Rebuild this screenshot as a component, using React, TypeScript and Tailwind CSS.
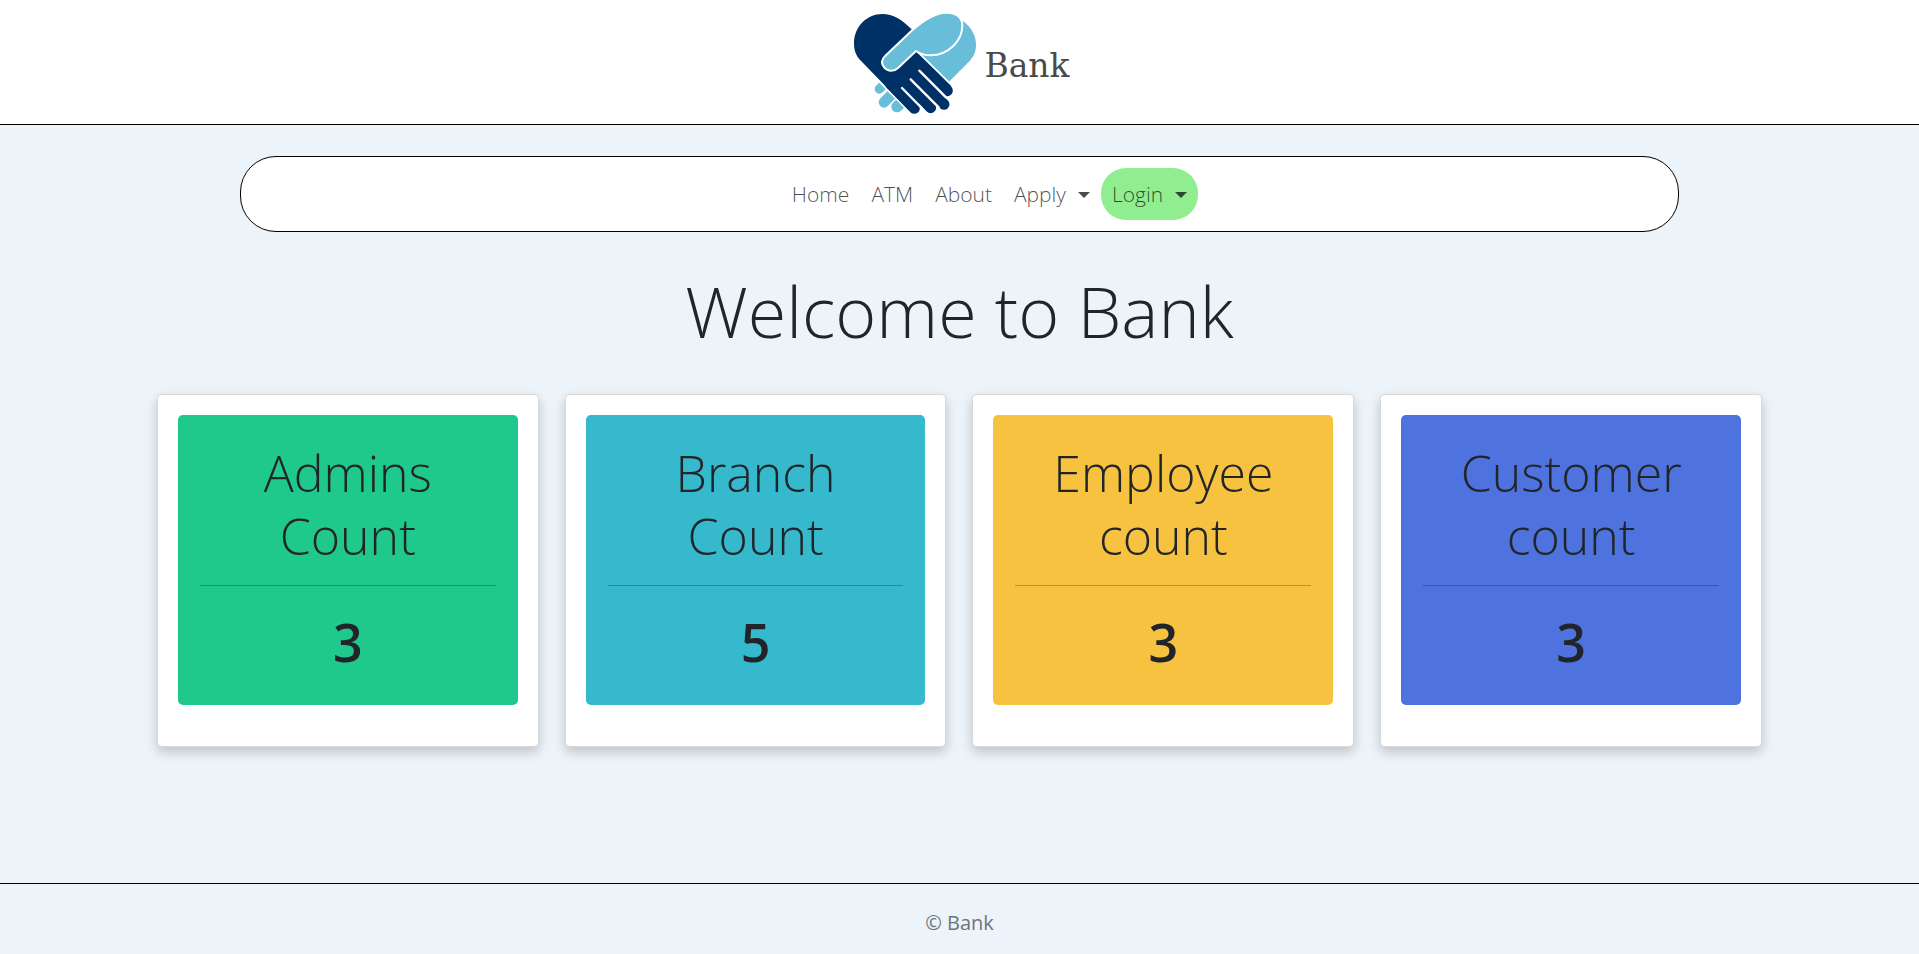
import React from "react";

type NavItem = { label: string; menu?: boolean; highlight?: boolean };

const navItems: NavItem[] = [
  { label: "Home" },
  { label: "ATM" },
  { label: "About" },
  { label: "Apply", menu: true },
  { label: "Login", menu: true, highlight: true },
];

const stats = [
  { title: ["Admins", "Count"], value: 3, color: "bg-[#1ec98b]" },
  { title: ["Branch", "Count"], value: 5, color: "bg-[#36b8cd]" },
  { title: ["Employee", "count"], value: 3, color: "bg-[#f7c240]" },
  { title: ["Customer", "count"], value: 3, color: "bg-[#4e73de]" },
];

function HandshakeLogo() {
  return (
    <svg viewBox="36 30 378 324" className="h-[108px] w-[126px]" aria-hidden="true">
      <g fill="none" stroke="#68bdd9" strokeLinecap="round">
        <path d="M118 267L136 249" strokeWidth="28" />
        <path d="M132 307L160 279" strokeWidth="32" />
        <path d="M171 320L192 299" strokeWidth="34" />
      </g>
      <path d="M64 184L216 338" stroke="#fff" strokeWidth="14" />
      <path
        d="M217 90C185 58 160 42 127 42C80 42 42 80 42 130C42 155 50 170 64 184L206 330L250 300L300 290L334 259L230 152Z"
        fill="#003166"
      />
      <g fill="none" stroke="#003166" strokeLinecap="round">
        <path d="M150 250L223 325" strokeWidth="33" />
        <path d="M180 230L272 323" strokeWidth="33" />
        <path d="M212 213L312 313" strokeWidth="33" />
        <path d="M232 181L322 272" strokeWidth="33" />
      </g>
      <g fill="none" stroke="#fff" strokeLinecap="round" strokeWidth="7">
        <path d="M186 264L248 327" />
        <path d="M212 238L296 322" />
        <path d="M238 212L318 292" />
      </g>
      <path
        d="M368 62C394 82 408 106 408 135C408 158 399 172 385 187L327 245L230 150Z"
        fill="#68bdd9"
      />
      <path d="M228 151L330 250" stroke="#fff" strokeWidth="5" />
      <path
        d="M215 92C258 54 290 38 320 38C348 38 367 52 367 76C367 122 326 166 272 166C254 166 242 163 228 153L174 204C161 216 144 215 133 203C122 190 125 178 136 167Z"
        fill="#68bdd9"
        stroke="#fff"
        strokeWidth="6"
        strokeLinejoin="round"
      />
    </svg>
  );
}

function Caret() {
  return (
    <span
      aria-hidden="true"
      className="ml-3 h-0 w-0 border-x-[6px] border-t-[6px] border-x-transparent border-t-current"
    />
  );
}

function NavEntry({ item }: { item: NavItem }) {
  if (item.highlight) {
    return (
      <button
        type="button"
        className="flex h-[52px] items-center rounded-[25px] bg-[#90ee90] px-[11px] pt-[2px] font-light text-black/70"
      >
        {item.label}
        <Caret />
      </button>
    );
  }
  if (item.menu) {
    return (
      <button type="button" className="flex h-[52px] items-center px-[11px] pt-[2px] font-light text-black/70">
        {item.label}
        <Caret />
      </button>
    );
  }
  return (
    <a href="#" className="flex h-[52px] items-center px-[11px] pt-[2px] font-light text-black/70">
      {item.label}
    </a>
  );
}

export default function App() {
  return (
    <div className="flex min-h-screen flex-col bg-[#ecf3f9] font-['Open_Sans','Noto_Sans',sans-serif] text-[#212529]">
      <header className="flex h-[125px] items-center justify-center border-b border-black bg-white pt-1">
        <a href="#" className="flex items-center gap-[6px] pl-[3px]">
          <HandshakeLogo />
          <span className="pt-1 font-['DejaVu_Serif',serif] text-[33px] text-[#4a4a4a]">Bank</span>
        </a>
      </header>

      <nav className="mx-auto mt-[31px] flex h-[76px] w-3/4 items-center justify-center rounded-[36px] border border-black bg-white">
        <ul className="flex items-center pl-[60px] text-[21px]">
          {navItems.map((item) => (
            <li key={item.label}>
              <NavEntry item={item} />
            </li>
          ))}
        </ul>
      </nav>

      <main className="flex-1">
        <h1 className="mt-9 text-center text-[70px] leading-[86px] font-light">Welcome to Bank</h1>
        <section className="mx-auto mt-10 grid w-[85%] grid-cols-4 gap-[26px] px-[13px]">
          {stats.map((stat) => (
            <article
              key={stat.title[0]}
              className="rounded-[5px] border border-black/15 bg-white px-5 pt-5 pb-[41px] shadow-[0_5px_12px_rgba(0,0,0,0.2)]"
            >
              <div className={`rounded-[5px] px-[22px] pt-[27px] pb-8 text-center ${stat.color}`}>
                <h2 className="text-[50px] leading-[63px] font-light">
                  {stat.title[0]}
                  <br />
                  {stat.title[1]}
                </h2>
                <hr className="mt-[17px] mb-6 border-black/25" />
                <p className="text-[52px] leading-[63px] font-semibold">{stat.value}</p>
              </div>
            </article>
          ))}
        </section>
      </main>

      <footer className="flex h-[71px] items-center justify-center border-t border-black pt-2 text-[20px] text-[#6c757d]">
        © Bank
      </footer>
    </div>
  );
}
